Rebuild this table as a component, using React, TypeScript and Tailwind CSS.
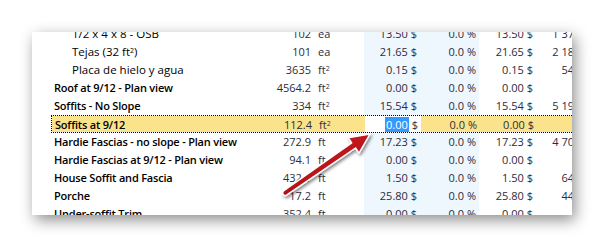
type Row = {
  label: string;
  sup?: string;
  indent?: boolean;
  qty: string;
  unit: string;
  unitSup?: boolean;
  price: string;
  pct: string;
  net: string;
  total: string;
  active?: boolean;
};

const rows: Row[] = [
  { label: "1/2 x 4 x 8 - OSB", indent: true, qty: "102", unit: "ea", price: "13.50 $", pct: "0.0 %", net: "13.50 $", total: "1 377.00 $" },
  { label: "Tejas (32 ft", sup: "2", indent: true, qty: "101", unit: "ea", price: "21.65 $", pct: "0.0 %", net: "21.65 $", total: "2 186.65 $" },
  { label: "Placa de hielo y agua", indent: true, qty: "3635", unit: "ft", unitSup: true, price: "0.15 $", pct: "0.0 %", net: "0.15 $", total: "545.25 $" },
  { label: "Roof at 9/12 - Plan view", qty: "4564.2", unit: "ft", unitSup: true, price: "0.00 $", pct: "0.0 %", net: "0.00 $", total: "0.00 $" },
  { label: "Soffits - No Slope", qty: "334", unit: "ft", unitSup: true, price: "15.54 $", pct: "0.0 %", net: "15.54 $", total: "5 190.36 $" },
  { label: "Soffits at 9/12", qty: "112.4", unit: "ft", unitSup: true, price: "0.00 $", pct: "0.0 %", net: "0.00 $", total: "0.00 $", active: true },
  { label: "Hardie Fascias - no slope - Plan view", qty: "272.9", unit: "ft", price: "17.23 $", pct: "0.0 %", net: "17.23 $", total: "4 702.07 $" },
  { label: "Hardie Fascias at 9/12 - Plan view", qty: "94.1", unit: "ft", price: "0.00 $", pct: "0.0 %", net: "0.00 $", total: "0.00 $" },
  { label: "House Soffit and Fascia", qty: "432.1", unit: "ft", price: "1.50 $", pct: "0.0 %", net: "1.50 $", total: "648.15 $" },
  { label: "Porche", qty: "17.2", unit: "ft", price: "25.80 $", pct: "0.0 %", net: "25.80 $", total: "443.76 $" },
  { label: "Under-soffit Trim", qty: "352.4", unit: "ft", price: "0.00 $", pct: "0.0 %", net: "0.00 $", total: "0.00 $" },
];

function EstimateRow({ row }: { row: Row }) {
  const bg = row.active ? "bg-[#fbe38c]" : "";
  return (
    <div
      className={`flex h-[18px] items-center ${
        row.active ? "border-y border-l border-dotted border-black" : ""
      }`}
    >
      <div
        className={`h-full w-[200px] shrink-0 whitespace-nowrap leading-[18px] ${bg} ${
          row.indent
            ? "pl-[21px] text-[11.5px] text-black"
            : "pl-[3px] font-semibold tracking-[-0.2px] text-black"
        }`}
      >
        {row.label}
        {row.sup && (
          <>
            <sup className="text-[7px]">{row.sup}</sup>)
          </>
        )}
      </div>
      <div className={`h-full w-[63px] shrink-0 pr-[3px] text-right leading-[18px] text-[#2c2c3c] ${bg}`}>
        {row.qty}
      </div>
      <div className={`h-full w-[50px] shrink-0 pl-[4px] leading-[18px] text-[#2c2c3c] ${bg}`}>
        {row.unit}
        {row.unitSup && <sup className="text-[7px]">2</sup>}
      </div>
      {row.active ? (
        <div className="h-full w-[56px] shrink-0 bg-white pr-[3px] text-right leading-[18px] text-[#2c2c3c]">
          <span className="bg-[#3399ff] px-px text-white">0.00</span> $
        </div>
      ) : (
        <div className="h-full w-[56px] shrink-0 bg-[#eef6fe] pr-[3px] text-right leading-[18px] text-[#2c2c3c]">
          {row.price}
        </div>
      )}
      <div
        className={`h-full w-[59px] shrink-0 pr-[3px] text-right leading-[18px] text-[#2c2c3c] ${
          row.active ? bg : "bg-[#eef6fe]"
        }`}
      >
        {row.pct}
      </div>
      <div className={`h-full w-[57px] shrink-0 pr-[3px] text-right leading-[18px] text-[#2c2c3c] ${bg}`}>
        {row.net}
      </div>
      <div className={`h-full w-[72px] shrink-0 whitespace-nowrap pr-[3px] text-right leading-[18px] text-[#2c2c3c] ${bg}`}>
        {row.total}
      </div>
      <div className={`h-full w-[20px] shrink-0 ${bg}`} />
    </div>
  );
}

function Arrow() {
  return (
    <svg className="pointer-events-none absolute inset-0" width="604" height="248" viewBox="0 0 604 248">
      <defs>
        <linearGradient id="shaft" x1="0" y1="0" x2="0.57" y2="0.82">
          <stop offset="0" stopColor="#e8232a" />
          <stop offset="1" stopColor="#a50d14" />
        </linearGradient>
        <filter id="drop" x="-20%" y="-20%" width="140%" height="140%">
          <feDropShadow dx="1.5" dy="2" stdDeviation="1.5" floodColor="#000" floodOpacity="0.45" />
        </filter>
      </defs>
      <path
        d="M283.5 190.9 L351.7 142.8 L348.2 137.7 L370 134 L359 153.1 L355.5 148 L286.5 195.1 A2.6 2.6 0 0 1 283.5 190.9 Z"
        fill="url(#shaft)"
        stroke="#fff"
        strokeWidth="1.5"
        strokeLinejoin="round"
        filter="url(#drop)"
      />
    </svg>
  );
}

export default function App() {
  return (
    <div
      className="relative h-[248px] w-[604px] overflow-hidden bg-white pl-[32px] pt-[32px] text-[11px]"
      style={{ fontFamily: '"Open Sans", "Noto Sans", sans-serif' }}
    >
      <div className="h-[183px] w-[540px] overflow-hidden bg-white shadow-[3px_5px_14px_rgba(0,0,0,0.45)]">
        <div className="-mt-[7px] pl-[19px]">
          {rows.map((row) => (
            <EstimateRow key={row.label} row={row} />
          ))}
        </div>
      </div>
      <Arrow />
    </div>
  );
}
